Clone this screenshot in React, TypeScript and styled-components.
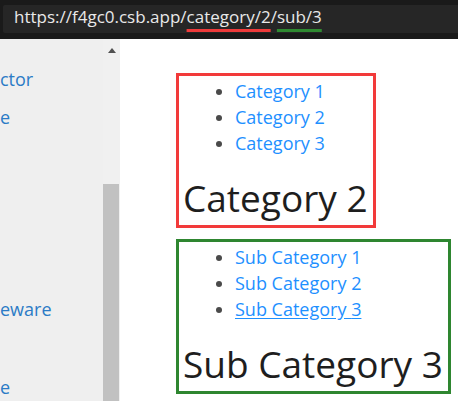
import React from "react";
import styled, { createGlobalStyle } from "styled-components";

const GlobalStyle = createGlobalStyle`
  html, body { margin: 0; padding: 0; background: #ffffff; }
  body { font-family: "Open Sans", "Noto Sans", sans-serif; }
  * { box-sizing: border-box; }
`;

const Frame = styled.div`
  display: flex;
  flex-direction: column;
  width: 458px;
  height: 401px;
  overflow: hidden;
  background: #ffffff;
`;

const TopBar = styled.div`
  display: flex;
  height: 39px;
  flex-shrink: 0;
  background: #1a1a1a;
  padding: 5px 0 6px 3px;
`;

const AddressField = styled.div`
  flex: 1;
  height: 28px;
  background: #262626;
  border-radius: 2px 0 0 2px;
  padding-left: 11px;
  font-family: "Open Sans", "Noto Sans", sans-serif;
  font-size: 17px;
  font-weight: 500;
  line-height: 23px;
  color: #e9e9e9;
  white-space: nowrap;
`;

const Marked = styled.span<{ $color: string }>`
  text-decoration: underline;
  text-decoration-color: ${(p) => p.$color};
  text-decoration-thickness: 3px;
  text-underline-offset: 6px;
  text-decoration-skip-ink: none;
`;

const Page = styled.div`
  flex: 1;
  display: flex;
  min-height: 0;
`;

const Sidebar = styled.nav`
  width: 103px;
  flex-shrink: 0;
  background: #efefef;
  display: flex;
  flex-direction: column;
  overflow: hidden;
`;

const SideLink = styled.a<{ $gap: number }>`
  display: block;
  margin-top: ${(p) => p.$gap}px;
  font-size: 18px;
  line-height: 26px;
  color: #2b7bc6;
  text-decoration: none;
  white-space: nowrap;
`;

const Scrollbar = styled.div`
  width: 17px;
  flex-shrink: 0;
  background: #f0f0f0;
  display: flex;
  flex-direction: column;
`;

const ArrowButton = styled.div`
  height: 24px;
  display: flex;
  align-items: center;
  justify-content: center;
  padding-bottom: 2px;
`;

const Triangle = styled.div`
  width: 0;
  height: 0;
  border-left: 4px solid transparent;
  border-right: 4px solid transparent;
  border-bottom: 5px solid #505050;
`;

const TrackSpace = styled.div`
  height: 121px;
`;

const Thumb = styled.div`
  flex: 1;
  background: #c1c1c1;
  margin-right: 1px;
`;

const Main = styled.main`
  flex: 1;
  background: #ffffff;
  padding: 34px 0 0 56px;
  display: flex;
  flex-direction: column;
  gap: 11px;
`;

const Box = styled.section<{ $color: string }>`
  width: fit-content;
  border: 3px solid ${(p) => p.$color};
  padding: 2px 5px 0 4px;
`;

const List = styled.ul`
  margin: 0;
  padding: 0 0 0 52px;
  list-style: disc;
`;

const Item = styled.li`
  font-size: 18px;
  line-height: 26px;
  color: #4a4a4a;
`;

const Link = styled.a<{ $active?: boolean }>`
  color: #1e90ff;
  text-decoration: ${(p) => (p.$active ? "underline" : "none")};
  text-underline-offset: 2px;
`;

const Heading = styled.h1`
  margin: 20px 0 5px;
  font-size: 37px;
  font-weight: 400;
  line-height: 44px;
  color: #1e1e1e;
  white-space: nowrap;
`;

const sideLinks = [
  { text: "ctor", gap: 27 },
  { text: "e", gap: 12 },
  { text: "eware", gap: 166 },
  { text: "e", gap: 52 },
];

export default function App() {
  return (
    <>
      <GlobalStyle />
      <Frame>
        <TopBar>
          <AddressField>
            https://f4gc0.csb.app/
            <Marked $color="#ef3b3b">category/2</Marked>/
            <Marked $color="#2f8a31">sub/3</Marked>
          </AddressField>
        </TopBar>
        <Page>
          <Sidebar>
            {sideLinks.map((l, i) => (
              <SideLink key={i} $gap={l.gap} href="#">
                {l.text}
              </SideLink>
            ))}
          </Sidebar>
          <Scrollbar>
            <ArrowButton>
              <Triangle />
            </ArrowButton>
            <TrackSpace />
            <Thumb />
          </Scrollbar>
          <Main>
            <Box $color="#f23a3a">
              <List>
                {[1, 2, 3].map((n) => (
                  <Item key={n}>
                    <Link href="#">Category {n}</Link>
                  </Item>
                ))}
              </List>
              <Heading>Category 2</Heading>
            </Box>
            <Box $color="#2e8630">
              <List>
                {[1, 2, 3].map((n) => (
                  <Item key={n}>
                    <Link href="#" $active={n === 3}>
                      Sub Category {n}
                    </Link>
                  </Item>
                ))}
              </List>
              <Heading>Sub Category 3</Heading>
            </Box>
          </Main>
        </Page>
      </Frame>
    </>
  );
}
